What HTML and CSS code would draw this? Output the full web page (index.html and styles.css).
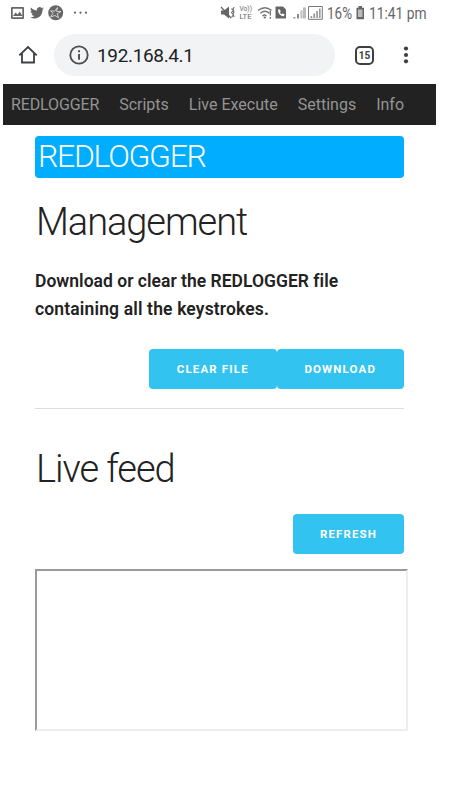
FILE: index.html
```html
<!DOCTYPE html>
<html lang="en">
<head>
<meta charset="utf-8">
<title>REDLOGGER</title>
<link rel="stylesheet" href="styles.css">
</head>
<body>
<div class="status">
  <svg width="451" height="28" viewBox="0 0 451 28" fill="#666">
    <path fill-rule="evenodd" d="M12 7h11q1 0 1 1v10q0 1-1 1H12q-1 0-1-1V8q0-1 1-1zM12.700 8.700v8.600h9.600V8.700zM13 16l2.600-3.500 2 2 2.200-3 2.600 4.500z"/>
    <path transform="translate(29.500 5.400) scale(.61)" d="M23.600 4.900c-.8.4-1.700.6-2.700.8 1-.6 1.700-1.500 2-2.600-.9.5-1.900.9-2.900 1.100A4.700 4.700 0 0 0 12 8.500C8.100 8.300 4.700 6.400 2.400 3.600c-1.200 2.100-.6 4.900 1.500 6.300-.8 0-1.500-.2-2.100-.6 0 2.300 1.600 4.200 3.800 4.700-.7.2-1.400.2-2.100.1.600 1.900 2.300 3.200 4.400 3.300A9.500 9.500 0 0 1 1 19.300c9.700 6.100 20.700-.8 20.300-12.100.9-.6 1.700-1.400 2.300-2.300z"/>
    <circle cx="55.700" cy="12.700" r="7.500"/>
    <path d="M57.500 7.500l-1 3.800 4.500.2-3.800 2.300 1.500 4-3.700-2.300-4.500 1.500 2.500-3.700-2.500-2.500 4 .5z" fill="none" stroke="#ddd" stroke-width=".9"/>
    <circle cx="75" cy="12.700" r="1.100"/><circle cx="80.500" cy="12.700" r="1.100"/><circle cx="86" cy="12.700" r="1.100"/>
    <path d="M221 10.500h3l5-4v12l-5-4h-3z"/><path d="M221 7l10 11" stroke="#666" stroke-width="1.300"/>
    <path d="M231.500 8.500l2 2-2 2 2 2-2 3M234 7l-1 3 1 2-1 2 1 3" fill="none" stroke="#777" stroke-width="1.200"/>
    <text x="239.500" y="11.300" font-size="6.500" textLength="12.500" lengthAdjust="spacingAndGlyphs">Vo))</text>
    <text x="239.500" y="19.300" font-size="6.500" textLength="12" lengthAdjust="spacingAndGlyphs">LTE</text>
    <path d="M258 10.500q7-5.500 13.500 0M260.300 13.200q4.700-4 9 0M262.500 16q2-2 4 0" fill="none" stroke="#777" stroke-width="1.400"/><circle cx="264.700" cy="17.500" r="1.100"/><path d="M270.300 11v4.500M270.300 17v1.700" stroke="#666" stroke-width="1.200"/>
    <path d="M276 6.500h7l3 3v9h-10.500V7z"/><path d="M278 9.500q-.2 6.300 6 6.700l.5-2-2-.8-1 .8q-1-.7-1.500-1.700l.7-1-.8-2z" fill="#fff"/>
    <path d="M293.500 18.500v-1.500h1.800v1.500zM297 18.500V14h2v4.500z" fill="#888"/><path d="M300.500 18.500v-8h2v8zM303 18.500V7.500h3v11z" fill="#bbb"/>
    <path d="M308.500 6.500h13.800v12.800h-13.800z" fill="none" stroke="#777"/>
    <path d="M310.500 18v-2h1.700v2zM313.300 18v-4.500h1.800V18zM316.200 18v-7h1.700v7zM319 18V8.500h1.600V18z" fill="#999"/>
    <text x="327" y="19" font-size="16.500" textLength="25" lengthAdjust="spacingAndGlyphs">16%</text>
    <path d="M358.500 6h3.500v1.700h2v11.600h-7.500V7.700h2z"/><path d="M358 9.500h4.500v7.500H358z" fill="#bbb"/>
    <text x="369" y="19" font-size="16.500" textLength="57.500" lengthAdjust="spacingAndGlyphs">11:41 pm</text>
  </svg>
</div>
<div class="browser">
  <svg class="home" width="20" height="20" viewBox="0 0 20 20" fill="none" stroke="#3c4043" stroke-width="1.800"><path d="M1.300 10.300L10 2.100l8.700 8.200M4 8.500V17.500h12V8.500"/></svg>
  <div class="address">
    <svg width="20" height="20" viewBox="0 0 20 20"><circle cx="10" cy="10" r="8.700" fill="none" stroke="#4a4d51" stroke-width="1.800"/><path d="M9.100 5.300h1.900v2H9.100zM9.100 9h1.900v5.700H9.100z" fill="#4a4d51"/></svg>
    <span>192.168.4.1</span>
  </div>
  <div class="tabs">15</div>
  <svg class="more" width="6" height="20" viewBox="0 0 6 20" fill="#3c4043"><circle cx="3" cy="3.500" r="2.100"/><circle cx="3" cy="10" r="2.100"/><circle cx="3" cy="16.300" r="2.100"/></svg>
</div>
<nav class="nav"><a class="brand">REDLOGGER</a><a>Scripts</a><a>Live Execute</a><a>Settings</a><a>Info</a></nav>
<main class="content">
  <h1 class="banner"><span>REDLOGGER</span></h1>
  <h2 class="management">Management</h2>
  <p class="description">Download or clear the REDLOGGER file<br><span>containing all the keystrokes.</span></p>
  <div class="actions"><button class="wide">CLEAR FILE</button><button class="wide">DOWNLOAD</button></div>
  <hr>
  <h2 class="live">Live feed</h2>
  <div class="actions refresh"><button>REFRESH</button></div>
  <div class="feed"></div>
</main>
</body>
</html>
```
FILE: styles.css
```css
* { box-sizing: border-box; }
body { margin: 0; width: 451px; height: 796px; overflow: hidden; background: #fff; color: #222; font-family: Roboto, sans-serif; }
svg { display: block; flex: none; }
.status { height: 28px; }
.browser { display: flex; align-items: center; height: 56px; padding: 0 0 2px 18px; }
.address { display: flex; align-items: center; gap: 8px; width: 281px; height: 42px; margin-left: 16px; padding-left: 15px; border-radius: 21px; background: #f1f3f4; font-size: 19px; letter-spacing: -.35px; color: #202124; }
.tabs { display: flex; align-items: center; justify-content: center; width: 19px; height: 19px; margin-left: 20px; border: 2px solid #3c4043; border-radius: 5px; color: #3c4043; font-size: 10px; font-weight: 700; }
.more { margin-left: 29px; }
.nav { display: flex; align-items: center; gap: 20px; width: 433px; height: 41px; margin-left: 3px; padding: 0 0 0 8px; background: #222; color: #949494; font-size: 16px; white-space: nowrap; }
.brand { letter-spacing: -.13px; }
.content { width: 369px; margin: 11px 0 0 35px; }
.banner { height: 42px; margin: 0; padding-left: 3px; border-radius: 4px; background: #00adff; color: #fff; font-size: 32px; line-height: 41px; font-weight: 300; letter-spacing: -1.300px; }
h2 { margin: 0; padding-left: 1px; font-size: 38px; font-weight: 300; letter-spacing: -1.050px; line-height: 46px; white-space: nowrap; }
.management { margin-top: 21px; }
.description { height: 55px; margin: 23px 0 0; font-size: 17.500px; font-weight: 600; letter-spacing: .020px; line-height: 27.500px; white-space: nowrap; }
.description span { letter-spacing: .150px; }
.actions { display: flex; justify-content: flex-end; height: 40px; margin-top: 26px; }
button { width: 111px; height: 40px; margin: 0; padding: 1px 0 0; border: 0; border-radius: 4px; background: #33c3f0; color: #fff; font: 700 11.500px/39px Roboto, sans-serif; letter-spacing: 1.150px; white-space: nowrap; }
.wide { width: 127.500px; }
hr { height: 1px; margin: 19px 0 0; border: 0; background: #ddd; }
.live { margin-top: 37px; }
.refresh { margin-top: 22px; }
.feed { width: 373px; height: 162px; margin-top: 15px; border: 2px solid; border-color: #9a9a9a #eee #eee #9a9a9a; }
```
